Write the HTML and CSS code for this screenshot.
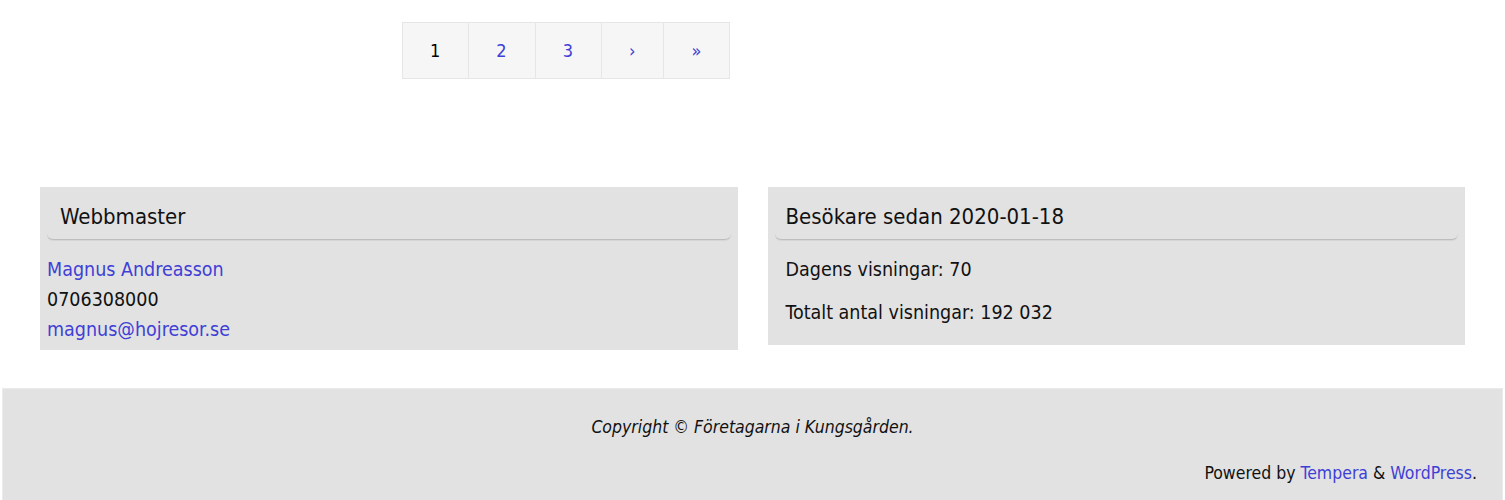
FILE: index.html
```html
<!doctype html>
<html>
  <head>
    <title>Företagarna i Kungsgården</title>
    <meta charset="utf-8">
    <link rel="stylesheet" href="styles.css">
  </head>
  <body>
    <div class="page">
      <nav class="pagination">
        <span class="page-item current">1</span>
        <a class="page-item" href="#">2</a>
        <a class="page-item" href="#">3</a>
        <a class="page-item" href="#">&rsaquo;</a>
        <a class="page-item" href="#">&raquo;</a>
      </nav>

      <div class="widgets">
        <section class="widget">
          <h3 class="widget-title">Webbmaster</h3>
          <div class="textwidget">
            <a href="#">Magnus Andreasson</a><br>
            0706308000<br>
            <a href="#">magnus@hojresor.se</a>
          </div>
        </section>
        <section class="widget">
          <h3 class="widget-title">Besökare sedan 2020-01-18</h3>
          <ul class="stats">
            <li>Dagens visningar: 70</li>
            <li>Totalt antal visningar: 192 032</li>
          </ul>
        </section>
      </div>
    </div>

    <footer class="site-footer">
      <p class="copyright">Copyright © Företagarna i Kungsgården.</p>
      <p class="powered">Powered by <a href="#">Tempera</a> &amp; <a href="#">WordPress</a>.</p>
    </footer>
  </body>
</html>
```

FILE: styles.css
```css
body {
  font-family: "DejaVu Sans Condensed", "DejaVu Sans", sans-serif;
  font-size: 19.5px;
  color: #111;
  margin: 0px;
}
a {
  color: #3f3fd6;
  text-decoration: none;
}
.page {
  padding: 22px 40px 0px 40px;
}
.pagination {
  display: flex;
  margin-left: 362px;
  height: 57px;
  font-size: 18px;
}
.page-item {
  display: flex;
  align-items: center;
  padding: 0px 28px 0px 27px;
  background-color: #f6f6f6;
  border: 1px solid #e6e6e6;
  border-left: none;
}
.page-item:first-child {
  border-left: 1px solid #e6e6e6;
}
.current {
  color: #000;
}
.widgets {
  display: flex;
  align-items: flex-start;
  gap: 30px;
  margin-top: 108px;
}
.widget {
  flex: 1;
  background-color: #e2e2e2;
  padding: 7px 7px 5px 7px;
}
.widget-title {
  margin: 0px;
  height: 45px;
  line-height: 46px;
  padding-left: 13px;
  font-size: 22px;
  font-weight: normal;
  border-bottom: 1px solid #bdbdbd;
  border-radius: 0px 0px 6px 6px;
  box-shadow: 0px 1px 1px rgba(0, 0, 0, 0.06);
}
.widget:last-child .widget-title {
  padding-left: 11px;
}
.textwidget {
  margin-top: 15px;
  line-height: 30px;
}
.stats {
  list-style: none;
  margin: 15px 0px 7px 0px;
  padding: 0px 0px 5px 11px;
  line-height: 30px;
}
.stats li {
  margin-bottom: 13px;
}
.stats li:last-child {
  margin-bottom: 0px;
}
.site-footer {
  margin: 38px 2px 0px 2px;
  padding: 26px 25px 20px 25px;
  background-color: #e2e2e2;
  border: 1px solid #ebebeb;
  font-size: 17.5px;
}
.site-footer p {
  margin: 0px;
  line-height: 24px;
}
.copyright {
  text-align: center;
  font-style: italic;
}
.powered {
  margin-top: 22px !important;
  text-align: right;
}
```
